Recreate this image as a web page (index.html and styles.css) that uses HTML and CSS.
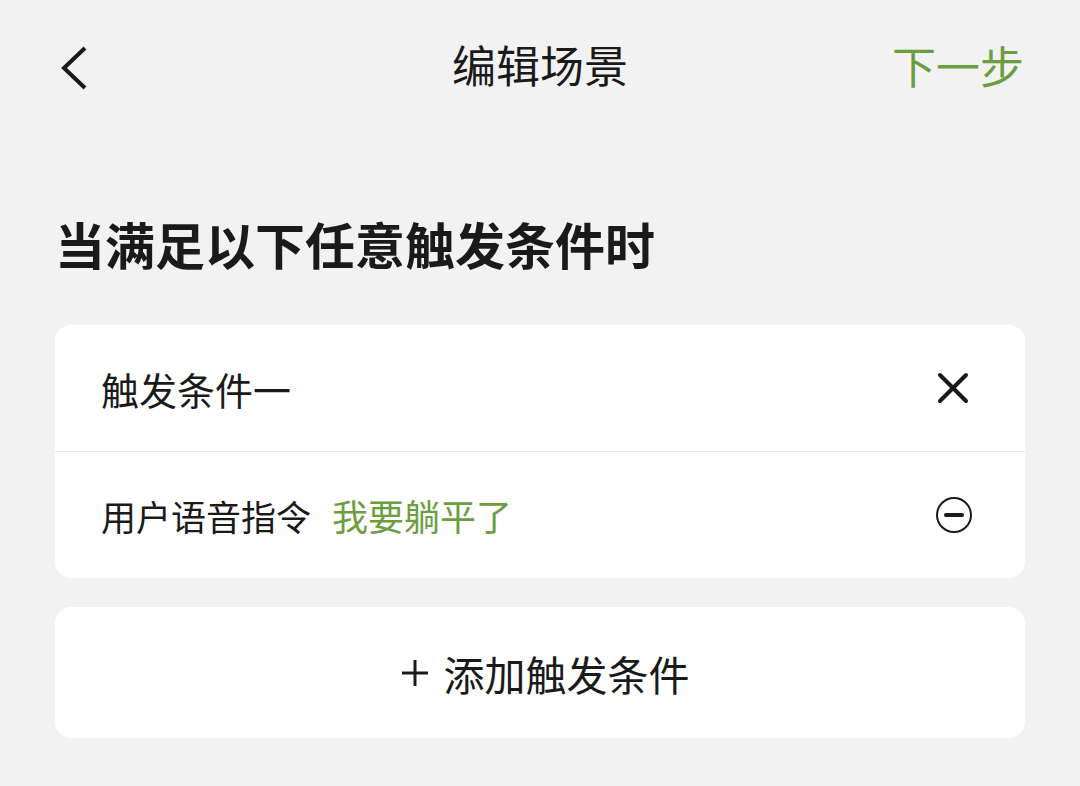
FILE: index.html
```html
<!DOCTYPE html>
<html>
<head>
    <title>编辑场景</title>
    <link rel="stylesheet" href="styles.css">
</head>
<body>
    <div class="topbar">
        <svg class="back" width="32" height="48" viewBox="0 0 32 48">
            <polyline points="27,4 6,24 27,44" fill="none" stroke="#1a1a1a" stroke-width="4"/>
        </svg>
        <div class="title">编辑场景</div>
        <div class="next">下一步</div>
    </div>

    <div class="page">
        <h1 class="section-title">当满足以下任意触发条件时</h1>

        <div class="card">
            <div class="row">
                <span class="label">触发条件一</span>
                <svg class="icon close" width="34" height="34" viewBox="0 0 34 34">
                    <path d="M4 4 L30 30 M30 4 L4 30" stroke="#1a1a1a" stroke-width="4" stroke-linecap="round"/>
                </svg>
            </div>
            <div class="row small">
                <span class="label">用户语音指令</span>
                <span class="value">我要躺平了</span>
                <svg class="icon" width="38" height="38" viewBox="0 0 38 38">
                    <circle cx="19" cy="19" r="17" fill="none" stroke="#1a1a1a" stroke-width="2"/>
                    <path d="M11 19 H27" stroke="#1a1a1a" stroke-width="4" stroke-linecap="round"/>
                </svg>
            </div>
        </div>

        <div class="card add">
            <svg class="plus" width="28" height="28" viewBox="0 0 28 28">
                <path d="M14 1 V27 M1 14 H27" stroke="#1a1a1a" stroke-width="3"/>
            </svg>
            <span>添加触发条件</span>
        </div>
    </div>
</body>
</html>
```

FILE: styles.css
```css
body {
    margin: 0;
    background: #f2f2f2;
    color: #1a1a1a;
    font-family: "Noto Sans CJK SC", "Noto Sans", sans-serif;
}

.topbar {
    height: 136px;
    display: flex;
    align-items: center;
    justify-content: space-between;
    padding: 0 56px 0 58px;
    position: relative;
}

.back {
    display: block;
}

.title {
    position: absolute;
    left: 0;
    right: 0;
    top: 34px;
    line-height: 60px;
    text-align: center;
    font-size: 44px;
    pointer-events: none;
}

.next {
    font-size: 44px;
    line-height: 60px;
    margin-top: -6px;
    color: #6b9e3f;
}

.page {
    padding: 0 55px;
}

.section-title {
    margin: 74px 0 48px 0;
    font-size: 50px;
    font-weight: bold;
    line-height: 67px;
}

.card {
    background: #fff;
    border-radius: 16px;
}

.row {
    height: 126px;
    display: flex;
    align-items: center;
    padding: 0 52px 0 46px;
    font-size: 38px;
}

.row + .row {
    border-top: 1px solid #e6e6e6;
}

.row.small .label {
    font-size: 35px;
}

.row.small .value {
    font-size: 36px;
}

.value {
    color: #6b9e3f;
    margin-left: 21px;
}

.icon {
    margin-left: auto;
}

.icon.close {
    margin-right: 3px;
}

.add {
    margin-top: 29px;
    height: 131px;
    display: flex;
    align-items: center;
    justify-content: center;
    padding-left: 10px;
    font-size: 41px;
}

.plus {
    margin-right: 15px;
}
```
